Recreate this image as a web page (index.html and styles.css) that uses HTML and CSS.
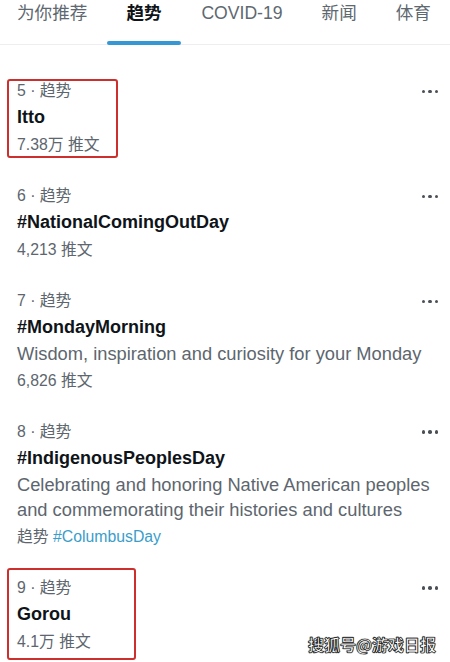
FILE: index.html
```html
<!DOCTYPE html>
<html lang="zh">
<head>
<meta charset="utf-8">
<link rel="stylesheet" href="styles.css">
</head>
<body>
<div class="page">
  <nav class="tabs">
    <div class="tab">为你推荐</div>
    <div class="tab active"><span class="label">趋势</span><span class="indicator"></span></div>
    <div class="tab">COVID-19</div>
    <div class="tab">新闻</div>
    <div class="tab">体育</div>
  </nav>
  <main class="list">
    <section class="trend">
      <div class="meta">5 · 趋势</div>
      <div class="more"><i></i><i></i><i></i></div>
      <div class="title">Itto</div>
      <div class="meta count">7.38万 推文</div>
      <span class="annot annot-a"></span>
    </section>
    <section class="trend">
      <div class="meta">6 · 趋势</div>
      <div class="more"><i></i><i></i><i></i></div>
      <div class="title">#NationalComingOutDay</div>
      <div class="meta count">4,213 推文</div>
    </section>
    <section class="trend">
      <div class="meta">7 · 趋势</div>
      <div class="more"><i></i><i></i><i></i></div>
      <div class="title">#MondayMorning</div>
      <div class="desc">Wisdom, inspiration and curiosity for your Monday</div>
      <div class="meta count">6,826 推文</div>
    </section>
    <section class="trend">
      <div class="meta">8 · 趋势</div>
      <div class="more"><i></i><i></i><i></i></div>
      <div class="title">#IndigenousPeoplesDay</div>
      <div class="desc">Celebrating and honoring Native American peoples and commemorating their histories and cultures</div>
      <div class="meta count">趋势 <span class="link">#ColumbusDay</span></div>
    </section>
    <section class="trend">
      <div class="meta">9 · 趋势</div>
      <div class="more"><i></i><i></i><i></i></div>
      <div class="title">Gorou</div>
      <div class="meta count">4.1万 推文</div>
      <span class="annot annot-b"></span>
      <span class="watermark">搜狐号@游戏日报</span>
    </section>
  </main>
</div>
</body>
</html>
```
FILE: styles.css
```css
* { box-sizing: border-box; }
html, body { margin: 0; padding: 0; background: #fff; }
body {
  font-family: "Liberation Sans", "Noto Sans CJK SC", sans-serif;
  color: #0f1419;
  width: 450px;
  height: 662px;
  overflow: hidden;
}
.page { width: 450px; }

.tabs {
  display: flex;
  align-items: flex-start;
  gap: 39px;
  padding-left: 17px;
  padding-top: 1px;
  height: 45px;
  border-bottom: 1px solid #eceff1;
  font-size: 17.6px;
  line-height: 25px;
  color: #5e6870;
}
.tab { display: flex; flex-direction: column; white-space: nowrap; }
.tab.active { color: #0f1419; font-weight: bold; }
.indicator {
  display: block;
  width: 74px;
  height: 4px;
  margin: 14.5px -19px 0 -19px;
  border-radius: 2px;
  background: #3597d3;
}

.list { padding-top: 21px; }
.trend {
  position: relative;
  display: grid;
  grid-template-columns: 1fr auto;
  align-items: start;
  padding: 12px 12px 13px 17px;
}
.trend > .title,
.trend > .desc,
.trend > .count { grid-column: 1 / -1; }

.meta {
  font-size: 15.8px;
  line-height: 26px;
  color: #5d666e;
}
.title {
  font-size: 18px;
  font-weight: bold;
  line-height: 27px;
  color: #0f1419;
}
.desc {
  font-size: 18.3px;
  line-height: 25.5px;
  color: #5d666e;
}
.count { line-height: 27px; }
.link { color: #3a9dca; }

.more {
  display: flex;
  gap: 3px;
  height: 26px;
  align-items: center;
  padding-top: 1px;
}
.more i {
  display: block;
  width: 3.5px;
  height: 3.5px;
  border-radius: 50%;
  background: #4a5058;
}

.annot {
  position: absolute;
  left: 7px;
  border: 2.5px solid #cc2f2c;
  border-radius: 3px;
  pointer-events: none;
}
.annot-a { top: 13px; width: 111px; height: 79px; }
.annot-b { top: 5px; width: 129px; height: 92px; }

.watermark {
  position: absolute;
  right: 14px;
  top: 71px;
  font-family: "Noto Sans CJK SC", sans-serif;
  font-size: 16px;
  font-weight: bold;
  line-height: 20px;
  color: #fff;
  -webkit-text-stroke: 0.6px #111;
  text-shadow: 0 0 1px #000, 0 0 1px #000;
}
```
